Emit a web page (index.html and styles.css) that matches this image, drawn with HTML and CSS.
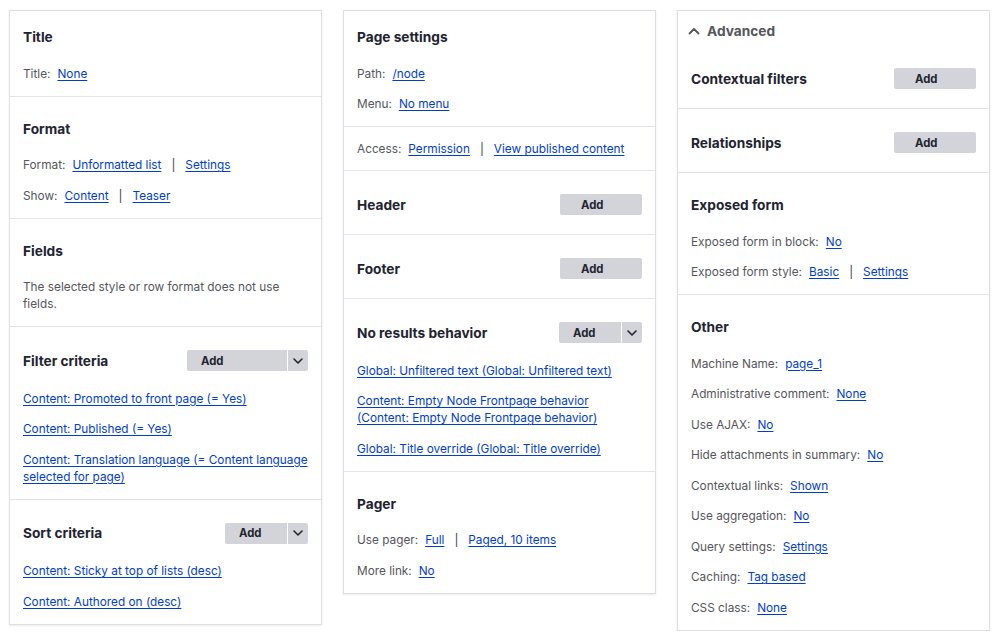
FILE: index.html
```html
<!DOCTYPE html>
<html lang="en">
<head>
<meta charset="utf-8">
<title>View settings</title>
<link rel="stylesheet" href="styles.css">
</head>
<body>
<div class="page">

  <div class="card">
    <section class="sec sec--first">
      <div class="sec-head"><h3 class="sec-title">Title</h3></div>
      <div class="rows">
        <div class="row"><span class="lbl">Title:</span><a href="#">None</a></div>
      </div>
    </section>
    <section class="sec">
      <div class="sec-head"><h3 class="sec-title">Format</h3></div>
      <div class="rows">
        <div class="row"><span class="lbl">Format:</span><a href="#">Unformatted list</a><span class="sep">|</span><a href="#">Settings</a></div>
        <div class="row"><span class="lbl">Show:</span><a href="#">Content</a><span class="sep">|</span><a href="#">Teaser</a></div>
      </div>
    </section>
    <section class="sec">
      <div class="sec-head"><h3 class="sec-title">Fields</h3></div>
      <div class="rows">
        <p class="row note">The selected style or row format does not use fields.</p>
      </div>
    </section>
    <section class="sec">
      <div class="sec-head">
        <h3 class="sec-title">Filter criteria</h3>
        <div class="dropbutton"><span class="db-main db-main--wide">Add</span><span class="db-toggle"><svg viewBox="0 0 10 6" width="10" height="6"><path d="M1 1l4 4 4-4" fill="none" stroke="#222330" stroke-width="1.6" stroke-linecap="round" stroke-linejoin="round"/></svg></span></div>
      </div>
      <div class="rows">
        <div class="row"><a href="#">Content: Promoted to front page (= Yes)</a></div>
        <div class="row"><a href="#">Content: Published (= Yes)</a></div>
        <div class="row"><a href="#">Content: Translation language (= Content language selected for page)</a></div>
      </div>
    </section>
    <section class="sec">
      <div class="sec-head">
        <h3 class="sec-title">Sort criteria</h3>
        <div class="dropbutton"><span class="db-main">Add</span><span class="db-toggle"><svg viewBox="0 0 10 6" width="10" height="6"><path d="M1 1l4 4 4-4" fill="none" stroke="#222330" stroke-width="1.6" stroke-linecap="round" stroke-linejoin="round"/></svg></span></div>
      </div>
      <div class="rows">
        <div class="row"><a href="#">Content: Sticky at top of lists (desc)</a></div>
        <div class="row"><a href="#">Content: Authored on (desc)</a></div>
      </div>
    </section>
  </div>

  <div class="card">
    <section class="sec sec--first">
      <div class="sec-head"><h3 class="sec-title">Page settings</h3></div>
      <div class="rows">
        <div class="row"><span class="lbl">Path:</span><a href="#">/node</a></div>
        <div class="row"><span class="lbl">Menu:</span><a href="#">No menu</a></div>
      </div>
    </section>
    <section class="sec sec--plain">
      <div class="rows">
        <div class="row"><span class="lbl">Access:</span><a href="#">Permission</a><span class="sep">|</span><a href="#">View published content</a></div>
      </div>
    </section>
    <section class="sec">
      <div class="sec-head sec-head--solo">
        <h3 class="sec-title">Header</h3>
        <span class="btn">Add</span>
      </div>
    </section>
    <section class="sec">
      <div class="sec-head sec-head--solo">
        <h3 class="sec-title">Footer</h3>
        <span class="btn">Add</span>
      </div>
    </section>
    <section class="sec">
      <div class="sec-head">
        <h3 class="sec-title">No results behavior</h3>
        <div class="dropbutton"><span class="db-main">Add</span><span class="db-toggle"><svg viewBox="0 0 10 6" width="10" height="6"><path d="M1 1l4 4 4-4" fill="none" stroke="#222330" stroke-width="1.6" stroke-linecap="round" stroke-linejoin="round"/></svg></span></div>
      </div>
      <div class="rows">
        <div class="row"><a href="#">Global: Unfiltered text (Global: Unfiltered text)</a></div>
        <div class="row"><a href="#">Content: Empty Node Frontpage behavior (Content: Empty Node Frontpage behavior)</a></div>
        <div class="row"><a href="#">Global: Title override (Global: Title override)</a></div>
      </div>
    </section>
    <section class="sec">
      <div class="sec-head"><h3 class="sec-title">Pager</h3></div>
      <div class="rows">
        <div class="row"><span class="lbl">Use pager:</span><a href="#">Full</a><span class="sep">|</span><a href="#">Paged, 10 items</a></div>
        <div class="row"><span class="lbl">More link:</span><a href="#">No</a></div>
      </div>
    </section>
  </div>

  <div class="card">
    <div class="summary">
      <svg class="caret" viewBox="0 0 12 8" width="12" height="8"><path d="M1.5 6.5l4.5-4.5 4.5 4.5" fill="none" stroke="#55565b" stroke-width="1.8" stroke-linecap="round" stroke-linejoin="round"/></svg>
      <span>Advanced</span>
    </div>
    <section class="sec sec--afterSummary">
      <div class="sec-head sec-head--solo">
        <h3 class="sec-title">Contextual filters</h3>
        <span class="btn">Add</span>
      </div>
    </section>
    <section class="sec">
      <div class="sec-head sec-head--solo">
        <h3 class="sec-title">Relationships</h3>
        <span class="btn">Add</span>
      </div>
    </section>
    <section class="sec">
      <div class="sec-head"><h3 class="sec-title">Exposed form</h3></div>
      <div class="rows">
        <div class="row"><span class="lbl">Exposed form in block:</span><a href="#">No</a></div>
        <div class="row"><span class="lbl">Exposed form style:</span><a href="#">Basic</a><span class="sep">|</span><a href="#">Settings</a></div>
      </div>
    </section>
    <section class="sec">
      <div class="sec-head"><h3 class="sec-title">Other</h3></div>
      <div class="rows">
        <div class="row"><span class="lbl">Machine Name:</span><a href="#">page_1</a></div>
        <div class="row"><span class="lbl">Administrative comment:</span><a href="#">None</a></div>
        <div class="row"><span class="lbl">Use AJAX:</span><a href="#">No</a></div>
        <div class="row"><span class="lbl">Hide attachments in summary:</span><a href="#">No</a></div>
        <div class="row"><span class="lbl">Contextual links:</span><a href="#">Shown</a></div>
        <div class="row"><span class="lbl">Use aggregation:</span><a href="#">No</a></div>
        <div class="row"><span class="lbl">Query settings:</span><a href="#">Settings</a></div>
        <div class="row"><span class="lbl">Caching:</span><a href="#">Tag based</a></div>
        <div class="row"><span class="lbl">CSS class:</span><a href="#">None</a></div>
      </div>
    </section>
  </div>

</div>
</body>
</html>
```

FILE: styles.css
```css
* { box-sizing: border-box; }

html, body {
  margin: 0;
  background: #ffffff;
}

body {
  font-family: Inter, "Liberation Sans", Arial, sans-serif;
  font-size: 11.8px;
  color: #55565b;
}

.page {
  display: flex;
  align-items: flex-start;
  gap: 21px;
  padding: 10px 10px 0 9px;
}

.card {
  width: 313px;
  flex: 0 0 313px;
  background: #fff;
  border: 1px solid #dedfe4;
  box-shadow: 0 1px 2px rgba(0, 0, 0, 0.08);
}

.sec {
  padding: 23px 13px 13px;
  border-top: 1px solid #e3e4e8;
}

.sec--first {
  padding-top: 17px;
  border-top: 0;
}

.sec--plain {
  padding-top: 14px;
  padding-bottom: 12px;
}

.sec--plain .rows {
  padding-top: 0;
}

.sec--afterSummary {
  padding-top: 28px;
  border-top: 0;
}

.sec-head {
  display: flex;
  align-items: center;
  justify-content: space-between;
  min-height: 18px;
  margin-bottom: 6px;
}

.sec-title {
  margin: 0;
  font-size: 13.7px;
  line-height: 18px;
  font-weight: 700;
  color: #222330;
}

.rows {
  display: flex;
  flex-direction: column;
  gap: 13.5px;
  padding-top: 13.5px;
}

.row {
  margin: 0;
  line-height: 17px;
}

.note {
  color: #55565b;
}

.lbl {
  margin-right: 7px;
}

a {
  color: #003ecc;
  text-decoration: underline;
  text-decoration-thickness: 1px;
  text-underline-offset: 2px;
}

.sep {
  display: inline-block;
  margin: 0 10px;
  color: #3b3c40;
}

.btn {
  display: inline-flex;
  align-items: center;
  width: 82px;
  height: 21px;
  padding-left: 21px;
  background: #d3d4d9;
  border-radius: 2px;
  font-size: 11.3px;
  font-weight: 700;
  color: #222330;
}

.dropbutton {
  display: flex;
  height: 21px;
  border-radius: 2px;
  overflow: hidden;
}

.db-main {
  display: flex;
  align-items: center;
  width: 62px;
  padding-left: 14px;
  background: #d3d4d9;
  font-size: 11.3px;
  font-weight: 700;
  color: #222330;
}

.db-main--wide {
  width: 100px;
}

.db-toggle {
  display: flex;
  align-items: center;
  justify-content: center;
  width: 20px;
  margin-left: 1px;
  background: #d3d4d9;
}

.summary {
  display: flex;
  align-items: center;
  gap: 7px;
  padding: 11px 13px 0 10px;
  line-height: 18px;
  font-size: 13.7px;
  font-weight: 700;
  color: #55565b;
}

.caret {
  display: block;
}
```
